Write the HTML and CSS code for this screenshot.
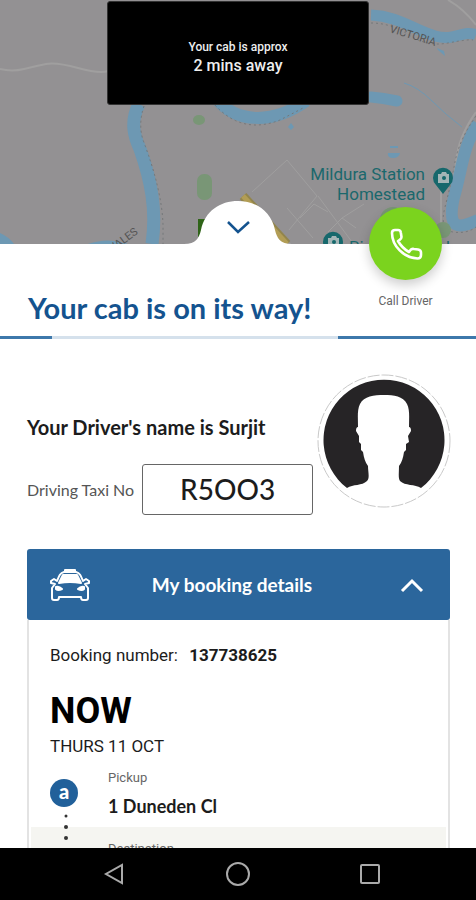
FILE: index.html
```html
<!DOCTYPE html>
<html lang="en">
<head>
<meta charset="utf-8">
<meta name="viewport" content="width=device-width, initial-scale=1">
<title>Your cab is on its way!</title>
<link rel="stylesheet" href="styles.css">
</head>
<body>
<div class="app">
  <header class="map">
    <svg class="map-art" viewBox="0 0 476 244" preserveAspectRatio="xMidYMid slice" aria-hidden="true">
      <rect width="476" height="244" fill="#939193"/>
      <g fill="none" stroke="#a09f9f" stroke-width="1">
        <path d="M0 69q12 3 24 0t22-5 32 4 30 3" stroke-width="2"/>
        <path d="M448 0q16 9 28 25" stroke-width="2"/>
        <path d="M476 112q-18 25-20 50t-15 25v57" stroke-width="2"/>
        <path d="M252 192l35-32 30 36-28 34M287 208l26 30M300 218l14-14 14 8M318 196l34 46M328 232l14-14 14 10M342 218l22-14"/>
      </g>
      <g fill="none" stroke="#6d98b3">
        <path d="M371 15C398 16 414 30 435 36S462 29 476 35" stroke-width="11"/>
        <path d="M216 98C235 123 272 125 306 101" stroke-width="12"/>
        <path d="M371 97q12 1 26 4" stroke-width="11" stroke-linecap="round"/>
        <path d="M139 104C130 122 134 136 140 149 151 180 157 210 152 244" stroke-width="13"/>
        <path d="M478 124C463 145 462 170 454 197 446 232 460 228 478 220" stroke-width="12"/>
        <path d="M404 83q14 4 28 18t30 26" stroke-width="1"/>
      </g>
      <g fill="#6d98b3">
        <path d="M0 233q9 4 14 11H0zM88 244q17-6 32-2l8 2zM437 48l7 3 1 5-7-6zM288 127l3-4 3 4-3 3zM388 153h12q-1 5-7 5t-5-5zM390 146h8v2h-8z"/>
      </g>
      <g fill="none" stroke="#74787a" stroke-width="1" stroke-dasharray="2 3">
        <path d="M371 23q20 0 38 12t39 8 25-3"/>
        <path d="M144 106q-6 18-1 34 19 50 20 85v19"/>
        <path d="M215 105q27 30 65 15l25-13"/>
        <path d="M476 116q-17 24-21 46t-10 45 8 25 23-5"/>
      </g>
      <g fill="#799676">
        <ellipse cx="199" cy="120" rx="6" ry="5"/>
        <rect x="197" y="174" width="15" height="26" rx="7"/>
        <circle cx="393" cy="220" r="13"/><circle cx="443" cy="230" r="8"/>
      </g>
      <path d="M198 219h9v18h-9z" fill="#2f6418"/>
      <path d="M243 196l44 48" fill="none" stroke="#92854c" stroke-width="9"/>
      <path d="M243 196l44 48" fill="none" stroke="#b29d55" stroke-width="5"/>
      <g class="map-road-label">
        <text x="389" y="32" transform="rotate(17 389 32)">VICTORIA</text>
        <text x="110" y="254" transform="rotate(-36 110 254)">WALES</text>
      </g>
      <g class="map-place">
        <text x="425" y="180" text-anchor="end">Mildura Station</text>
        <text x="425" y="200" text-anchor="end">Homestead</text>
        <text x="349" y="253">Rio Vista Park</text>
      </g>
      <g id="pin">
        <path d="M443 194l-7-9a10 10 0 1 1 14 0z" fill="#16686c"/>
        <path d="M438 174h3l1-2h4l1 2h2v9h-11z" fill="#a3b5b6"/>
        <circle cx="444" cy="178" r="2" fill="#16686c"/>
      </g>
      <use href="#pin" x="-110" y="64"/>
    </svg>
    <div class="eta" role="status">
      <span class="eta-label">Your cab is approx</span>
      <strong class="eta-time">2 mins away</strong>
    </div>
  </header>

  <main class="sheet">
    <button class="collapse" type="button" aria-label="Collapse panel">
      <svg width="108" height="46" viewBox="0 0 108 46" aria-hidden="true">
        <path d="M0 46V44C12 44 15 38 17 30 21 11 36 1 54 1S87 11 91 30C93 38 96 44 108 44v2z" fill="#fff"/>
        <path d="M44 22l10 10 11-10" fill="none" stroke="#14538f" stroke-width="2.5"/>
      </svg>
    </button>
    <div class="call">
      <button class="call-button" type="button" aria-labelledby="call-label">
        <svg width="34" height="34" viewBox="0 0 34 34" fill="none" stroke="#fff" stroke-width="2.6" stroke-linejoin="round" aria-hidden="true">
          <path d="M3 6Q3 3 6 3h3Q11.500 3 11.800 5.500L12.500 10Q12.500 12 10.500 13L9 14Q13 21 20 25l1.500-2Q22.500 21.500 25 22l4 .5Q32 23 32 25.500v2.500Q32 31.500 28.500 31.500C15 31 3 19 3 6z"/>
        </svg>
      </button>
      <span class="call-label" id="call-label">Call Driver</span>
    </div>

    <h1 class="title">Your cab is on its way!</h1>
    <div class="progress"><span class="progress-track"></span></div>

    <section class="driver">
      <div class="driver-info">
        <h2 class="driver-name">Your Driver's name is Surjit</h2>
        <div class="taxi">
          <span class="taxi-label">Driving Taxi No</span>
          <strong class="taxi-number">R5OO3</strong>
        </div>
      </div>
      <svg class="avatar" width="134" height="134" viewBox="0 0 134 134" role="img" aria-label="Driver photo">
        <circle cx="67" cy="67" r="66" fill="#fff" stroke="#c9c9c9" stroke-dasharray="12 2"/>
        <path d="M30 114A60.500 60.500 0 1 1 104 114C98 110 88 112 83 107 81 104 82 98 82 92 85 88 86 84 87 78L89 76 89 70 92 68 91 62 94 57Q94 53 92 53C92 44 93 36 90 30 86 22 77 21 67 21S47 22 43 30C40 36 41 44 41 53Q39 53 39 57L42 62 42 68 44 70 44 76 46 78C47 84 48 88 51 92 51 98 53 104 50 107 45 112 36 110 30 114z" fill="#262426"/>
      </svg>
    </section>

    <section class="booking">
      <button class="booking-toggle" type="button" aria-expanded="true" aria-controls="booking-details">
        <svg width="40" height="32" viewBox="0 0 40 32" fill="none" stroke="#fff" stroke-width="2" stroke-linejoin="round" aria-hidden="true">
          <path d="M15 3V1h10v2" fill="#fff"/>
          <path d="M7 12C9 7 10 4 14 3h12c4 1 5 4 7 9l3-2 3 2v2l-4 1 3 4v10q0 2-2 2h-3q-2 0-2-3H9q0 3-2 3H4q-2 0-2-2V19l3-4-4-1v-2l3-2z"/>
          <path d="M9 14l4-8h14l4 8q-11-2-22 0z" fill="#fff"/>
          <path d="M6 18q3-1 6 2-4 2-6 0zM34 18q-3-1-6 2 4 2 6 0z" fill="#fff"/>
        </svg>
        <span class="booking-title">My booking details</span>
        <svg class="caret" width="24" height="16" viewBox="0 0 24 16" fill="none" stroke="#fff" stroke-width="3" aria-hidden="true"><path d="M2 14L12 4l10 10"/></svg>
      </button>
      <div class="booking-body" id="booking-details">
        <p class="booking-number">Booking number: <strong>137738625</strong></p>
        <p class="when">NOW</p>
        <p class="date">THURS 11 OCT</p>
        <ol class="stops">
          <li class="stop">
            <span class="marker">a</span>
            <div><span class="stop-label">Pickup</span><strong class="stop-place">1 Duneden Cl</strong></div>
            <svg class="dots" width="4" height="28" viewBox="0 0 4 28" fill="#333" aria-hidden="true"><circle cx="2" cy="3" r="1.500"/><circle cx="2" cy="14" r="2"/><circle cx="2" cy="25" r="2"/></svg>
          </li>
          <li class="stop stop-end"><span></span><div><span class="stop-label">Destination</span></div></li>
        </ol>
      </div>
    </section>
  </main>

  <nav class="system-nav" aria-label="System">
    <button type="button" aria-label="Back"><svg width="38" height="24" viewBox="0 0 38 24"><path d="M35 3v18L19 12z"/></svg></button>
    <button type="button" aria-label="Home"><svg width="24" height="24" viewBox="0 0 24 24"><circle cx="12" cy="12" r="11"/></svg></button>
    <button type="button" aria-label="Recent apps"><svg width="22" height="24" viewBox="0 0 22 24"><rect x="2" y="3" width="18" height="18" rx="1"/></svg></button>
  </nav>
</div>
</body>
</html>
```

FILE: styles.css
```css
* { box-sizing: border-box; }

body, h1, h2, p, ol { margin: 0; padding: 0; }

body {
  background: #fff;
  color: #1c1c1c;
  font-family: Roboto, "Liberation Sans", sans-serif;
}

button {
  border: 0;
  padding: 0;
  background: none;
  font: inherit;
  cursor: pointer;
}

svg { display: block; }

.app {
  display: flex;
  flex-direction: column;
  height: 100vh;
}

.map {
  position: relative;
  flex: none;
  display: flex;
  justify-content: center;
  padding: 1px 0 139px;
}

.map-art {
  position: absolute;
  inset: 0;
  width: 100%;
  height: 100%;
}

.map-road-label { fill: #555; font-size: 11px; }
.map-place { fill: #1b686c; font-size: 17px; }

.eta {
  position: relative;
  display: flex;
  flex-direction: column;
  align-items: center;
  width: 55%;
  padding: 36px 0 28px;
  border: 1px solid #333;
  border-radius: 3px;
  background: #000;
  color: #eee;
}

.eta-label { font-size: 12px; line-height: 18px; font-weight: 500; }
.eta-time { font-size: 16px; line-height: 20px; font-weight: 500; }

.sheet {
  position: relative;
  flex: 1;
  min-height: 0;
  background: #fff;
  display: flex;
  flex-direction: column;
}

.collapse {
  position: absolute;
  top: -44px;
  left: 50%;
  transform: translateX(-50%);
}

.call {
  position: absolute;
  top: -37px;
  right: 34px;
  display: flex;
  flex-direction: column;
  align-items: center;
  gap: 12px;
}

.call-button {
  display: grid;
  place-items: center;
  width: 73px;
  height: 73px;
  border-radius: 50%;
  background: #7bd31e;
  box-shadow: 0 5px 12px rgba(0, 0, 0, 0.2);
}

.call-label { color: #666; font-size: 12px; line-height: 18px; }

.title, .driver-name, .taxi, .booking-title, .stop-place, .marker {
  font-family: Lato, "Open Sans", sans-serif;
}

.title {
  padding: 46px 28px 11px;
  color: #14538f;
  font-size: 29px;
  line-height: 35px;
  font-weight: 700;
}

.progress { flex: none; height: 3px; padding: 0 29% 0 11%; background: #3d78ab; }
.progress-track { display: block; height: 100%; background: #d5e1ec; }

.driver {
  display: flex;
  justify-content: space-between;
  align-items: flex-start;
  padding: 35px 25px 34px 27px;
}

.driver-info { padding-top: 40px; }
.driver-name { font-size: 20px; line-height: 26px; font-weight: 700; }
.taxi { display: flex; align-items: center; gap: 8px; margin-top: 24px; }
.taxi-label { color: #555; font-size: 16px; line-height: 20px; }

.taxi-number {
  width: 171px;
  border: 1px solid #666;
  border-radius: 3px;
  font-size: 28px;
  line-height: 49px;
  font-weight: 500;
  text-align: center;
}

.avatar { flex: none; margin-left: -40px; }

.booking {
  flex: 1;
  min-height: 0;
  display: flex;
  flex-direction: column;
  margin: 0 26px 0 27px;
}

.booking-toggle {
  flex: none;
  display: grid;
  grid-template-columns: 40px 1fr 50px;
  align-items: center;
  height: 71px;
  padding: 0 26px 0 23px;
  border-radius: 3px;
  background: #2b669c;
  color: #fff;
}

.booking-title { font-size: 19px; font-weight: 700; }
.caret { justify-self: end; }

.booking-body {
  flex: 1;
  min-height: 0;
  overflow: hidden;
  border: solid #e3e3e3;
  border-width: 0 2px;
}

.booking-number { padding: 25px 21px 0; font-size: 17px; line-height: 20px; }
.booking-number strong { margin-left: 7px; font-weight: 700; }
.when { padding: 26px 21px 0; color: #000; font-size: 36px; line-height: 40px; font-weight: 700; }
.date { padding: 6px 21px 0; font-size: 17px; line-height: 18px; }

.stops { list-style: none; }

.stop {
  position: relative;
  display: grid;
  grid-template-columns: 28px 1fr;
  column-gap: 30px;
  padding: 14px 21px 10px;
}

.stop-end { margin: 0 2px; padding: 13px 19px; background: #f5f5f1; }
.stop-label { display: block; color: #666; font-size: 13px; line-height: 18px; }
.stop-place { display: block; margin-top: 8px; font-size: 18px; line-height: 22px; }

.marker {
  width: 28px;
  height: 28px;
  margin-top: 10px;
  border-radius: 50%;
  background: #21609a;
  color: #fff;
  font-size: 20px;
  line-height: 25px;
  font-weight: 900;
  text-align: center;
}

.dots { position: absolute; z-index: 1; top: 58px; left: 35px; }

.system-nav {
  flex: none;
  display: grid;
  grid-template-columns: repeat(3, 132px);
  justify-content: center;
  justify-items: center;
  align-items: center;
  height: 52px;
  background: #000;
}

.system-nav svg { fill: none; stroke: #aaa; stroke-width: 2; }
```
